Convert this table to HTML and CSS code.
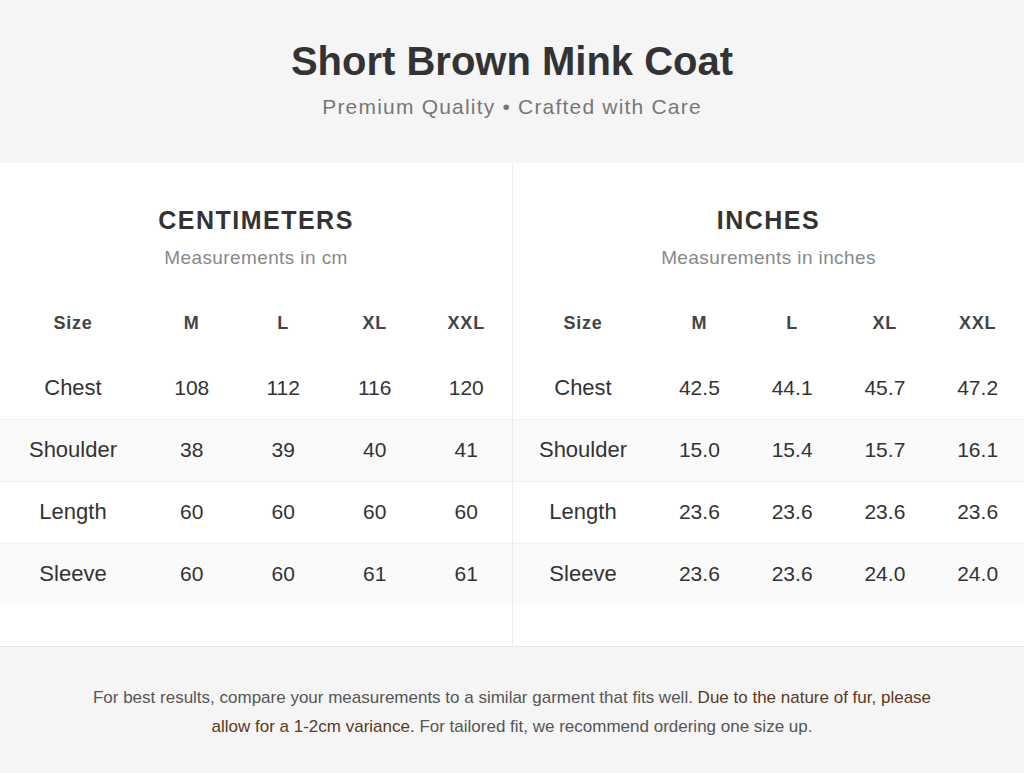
FILE: index.html
```html
<!DOCTYPE html>
<html lang="en">
<head>
<meta charset="utf-8">
<title>Short Brown Mink Coat – Size Chart</title>
<link rel="stylesheet" href="styles.css">
</head>
<body>
<div class="page">
  <header class="hero">
    <h1 class="hero-title">Short Brown Mink Coat</h1>
    <p class="hero-sub">Premium Quality • Crafted with Care</p>
  </header>

  <main class="panels">
    <section class="panel panel-cm">
      <h2 class="panel-title">CENTIMETERS</h2>
      <p class="panel-sub">Measurements in cm</p>
      <table class="chart">
        <thead>
          <tr><th class="c-label">Size</th><th>M</th><th>L</th><th>XL</th><th>XXL</th></tr>
        </thead>
        <tbody>
          <tr><td class="c-label">Chest</td><td>108</td><td>112</td><td>116</td><td>120</td></tr>
          <tr class="alt"><td class="c-label">Shoulder</td><td>38</td><td>39</td><td>40</td><td>41</td></tr>
          <tr><td class="c-label">Length</td><td>60</td><td>60</td><td>60</td><td>60</td></tr>
          <tr class="alt"><td class="c-label">Sleeve</td><td>60</td><td>60</td><td>61</td><td>61</td></tr>
        </tbody>
      </table>
    </section>
    <section class="panel panel-in">
      <h2 class="panel-title">INCHES</h2>
      <p class="panel-sub">Measurements in inches</p>
      <table class="chart">
        <thead>
          <tr><th class="c-label">Size</th><th>M</th><th>L</th><th>XL</th><th>XXL</th></tr>
        </thead>
        <tbody>
          <tr><td class="c-label">Chest</td><td>42.5</td><td>44.1</td><td>45.7</td><td>47.2</td></tr>
          <tr class="alt"><td class="c-label">Shoulder</td><td>15.0</td><td>15.4</td><td>15.7</td><td>16.1</td></tr>
          <tr><td class="c-label">Length</td><td>23.6</td><td>23.6</td><td>23.6</td><td>23.6</td></tr>
          <tr class="alt"><td class="c-label">Sleeve</td><td>23.6</td><td>23.6</td><td>24.0</td><td>24.0</td></tr>
        </tbody>
      </table>
    </section>
  </main>

  <footer class="note">
    <p class="note-text">For best results, compare your measurements to a similar garment that fits well. <span class="note-em">Due to the nature of fur, please allow for a 1-2cm variance.</span> For tailored fit, we recommend ordering one size up.</p>
  </footer>
</div>
</body>
</html>
```

FILE: styles.css
```css
* { box-sizing: border-box; }

html, body {
  margin: 0;
  padding: 0;
  background: #ffffff;
}

body {
  font-family: "Liberation Sans", Arial, sans-serif;
  color: #333333;
}

.page {
  width: 1024px;
  height: 773px;
  display: flex;
  flex-direction: column;
  overflow: hidden;
}

.hero {
  height: 163px;
  background: #f5f5f5;
  display: flex;
  flex-direction: column;
  align-items: center;
  padding-top: 38px;
}

.hero-title {
  margin: 0;
  font-size: 40px;
  line-height: 46px;
  font-weight: 700;
  color: #333333;
  letter-spacing: 0;
}

.hero-sub {
  margin: 10px 0 0;
  font-size: 21px;
  line-height: 26px;
  color: #777777;
  letter-spacing: 1.2px;
}

.panels {
  height: 483px;
  display: grid;
  grid-template-columns: 513px 1fr;
  background: #ffffff;
}

.panel {
  display: flex;
  flex-direction: column;
  align-items: center;
  padding-top: 42px;
}

.panel-cm {
  border-right: 1px solid #ececec;
}

.panel-title {
  margin: 0;
  font-size: 25px;
  line-height: 30px;
  font-weight: 700;
  color: #333333;
  letter-spacing: 1.5px;
}

.panel-sub {
  margin: 11px 0 0;
  font-size: 19px;
  line-height: 24px;
  color: #888888;
  letter-spacing: 0.4px;
}

.chart {
  margin-top: 20px;
  width: 100%;
  border-collapse: collapse;
  table-layout: fixed;
}

.chart th,
.chart td {
  text-align: center;
  padding: 0;
}

.chart th {
  height: 67px;
  font-size: 18px;
  font-weight: 700;
  color: #444444;
  letter-spacing: 0.8px;
}

.chart td {
  height: 62px;
  font-size: 21px;
  color: #333333;
}

.chart td.c-label {
  font-size: 22px;
}

.panel-cm .c-label { width: 146px; }
.panel-in .c-label { width: 140px; }

.chart tbody tr {
  border-top: 1px solid #f0f0f0;
}

.chart tbody tr:first-child {
  border-top: none;
}

.chart tr.alt {
  background: #fafafa;
}

.note {
  flex: 1;
  background: #f5f5f5;
  border-top: 1px solid #e8e8e8;
  display: flex;
  justify-content: center;
  padding: 36px 60px 0;
}

.note-text {
  margin: 0;
  max-width: 850px;
  text-align: center;
  font-size: 17px;
  line-height: 29px;
  color: #555555;
}

.note-em {
  color: #5b3a22;
}
```
